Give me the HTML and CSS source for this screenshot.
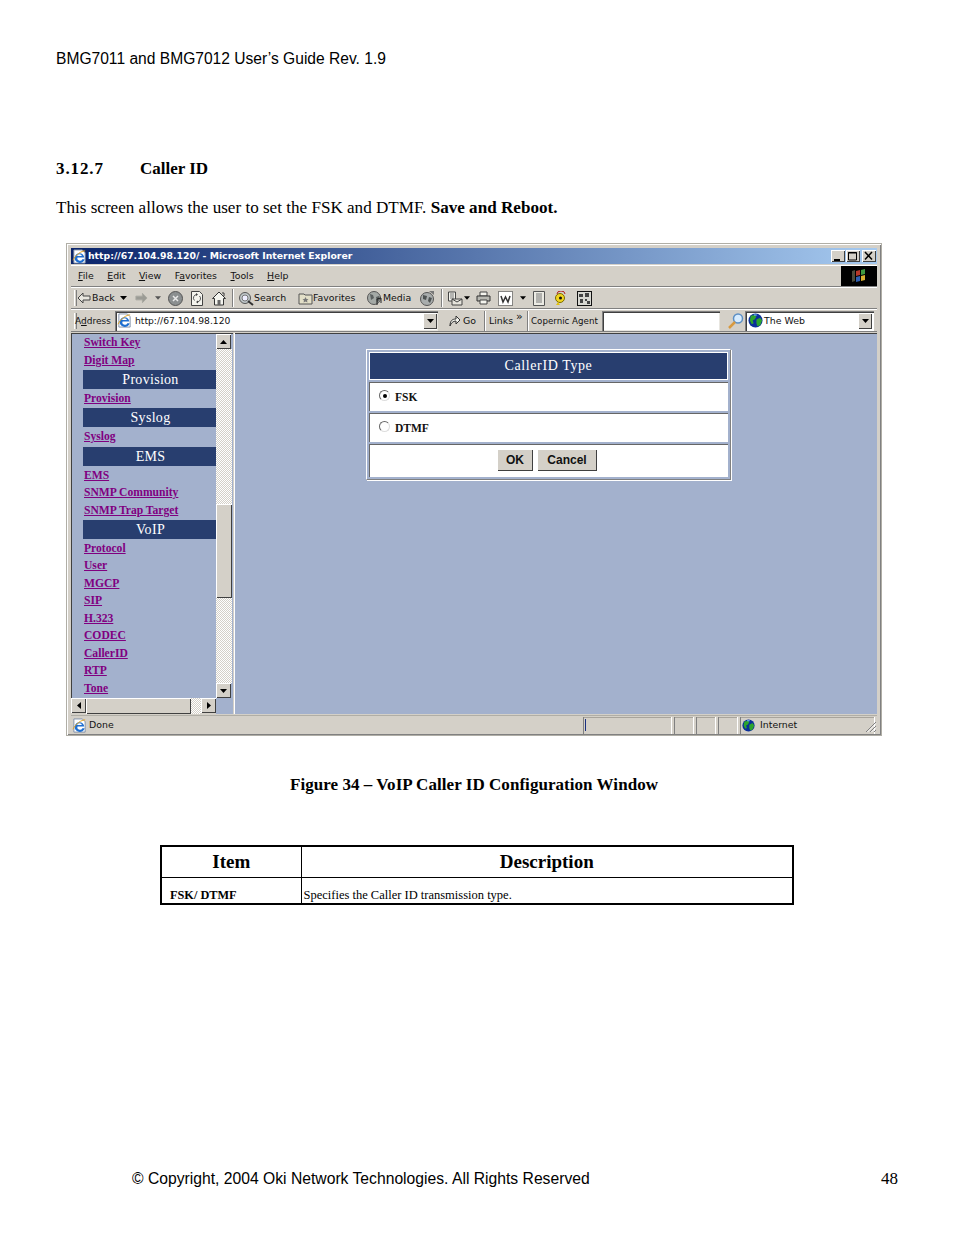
FILE: index.html
```html
<!DOCTYPE html>
<html lang="en">
<head>
<meta charset="utf-8">
<title>BMG7011 and BMG7012 User's Guide</title>
<link rel="stylesheet" href="styles.css">
</head>
<body>
<svg class="defs" width="0" height="0" aria-hidden="true">
  <defs>
    <symbol id="ie" viewBox="0 0 16 16">
      <path d="M2 1h9l3 3v11H2z" fill="#fff" stroke="#7f8fa8"/>
      <path d="M3 9a5 4.600 0 0 1 10 0H6a2.500 2.300 0 0 0 5 2h2.500a5 4.500 0 0 1-10.500-2z" fill="#1f6fd0" fill-rule="evenodd"/>
      <path d="M5.500 7.500a2.500 2 0 0 1 5 0z" fill="#fff"/>
      <path d="M1 12C4 6 10 2 14 2" fill="none" stroke="#e3a21a"/>
    </symbol>
    <symbol id="globe" viewBox="0 0 16 16">
      <circle cx="8" cy="8" r="7.500" fill="#0b2f9a"/>
      <path d="M3 3l4-1 2 2-2 3-2 1 1 3-2 1-2-4zM9 7l4-2 2 3-2 5-3 1-1-3z" fill="#2da52d"/>
      <path d="M6 1.500l3 0 1 1-3 .5z" fill="#7fd0ff"/>
    </symbol>
    <symbol id="drop" viewBox="0 0 7 4"><path d="M0 0h7L3.500 4z" fill="#000"/></symbol>
    <symbol id="dropg" viewBox="0 0 7 4"><path d="M0 0h7L3.500 4z" fill="#555"/></symbol>
  </defs>
</svg>

<main class="page">
  <p class="running">BMG7011 and BMG7012 User’s Guide Rev. 1.9</p>
  <h2 class="section"><span class="section-no">3.12.7</span><span>Caller ID</span></h2>
  <p class="intro">This screen allows the user to set the FSK and DTMF. <b>Save and Reboot.</b></p>

  <div class="win">
    <div class="title">
      <svg class="title-ico" width="15" height="15"><use href="#ie"/></svg>
      <span class="title-text">http://67.104.98.120/ - Microsoft Internet Explorer</span>
      <span class="ctl">
        <span class="cbtn"><svg width="13" height="12" viewBox="0 0 13 12"><path d="M3 9h6v2H3z" fill="#000"/></svg></span>
        <span class="cbtn"><svg width="13" height="12" viewBox="0 0 13 12"><path d="M2.500 2.500h8v7.500h-8zM2 3h9" fill="none" stroke="#000"/></svg></span>
        <span class="cbtn last"><svg width="13" height="12" viewBox="0 0 13 12"><path d="M3 2l7 7.500M10 2L3 9.500" fill="none" stroke="#000" stroke-width="1.500"/></svg></span>
      </span>
    </div>

    <div class="menubar">
      <span class="menu"><u>F</u>ile</span>
      <span class="menu"><u>E</u>dit</span>
      <span class="menu"><u>V</u>iew</span>
      <span class="menu">F<u>a</u>vorites</span>
      <span class="menu"><u>T</u>ools</span>
      <span class="menu"><u>H</u>elp</span>
      <span class="brand">
        <svg width="18" height="17" viewBox="0 0 18 17">
          <path d="M2 3l3-1v11l-3 1z" fill="#4a4a3a"/>
          <path d="M6 3l4-1v5l-4 1z" fill="#b5382a"/><path d="M11 2l4-1v5l-4 1z" fill="#3f9a3f"/>
          <path d="M6 9l4-1v5l-4 1z" fill="#2f5fb0"/><path d="M11 8l4-1v5l-4 1z" fill="#d8b030"/>
        </svg>
      </span>
    </div>

    <div class="toolbar">
      <span class="grip"></span>
      <svg width="14" height="12" viewBox="0 0 14 12"><path d="M6 1L1 6l5 5V8h7V4H6z" fill="#e8e6df" stroke="#444"/></svg>
      <span class="tb-label back">Back</span>
      <svg class="m7" width="7" height="4"><use href="#drop"/></svg>
      <svg class="m8" width="13" height="12" viewBox="0 0 14 12"><path d="M8 1l5 5-5 5V8H1V4h7z" fill="#9b9b95" stroke="#a8a8a0"/></svg>
      <svg class="m7" width="6" height="4"><use href="#dropg"/></svg>
      <svg class="m7" width="15" height="15" viewBox="0 0 15 15"><circle cx="7.500" cy="7.500" r="7" fill="#8b8f90" stroke="#555"/><path d="M5 5l5 5M10 5l-5 5" stroke="#e8e8e8" stroke-width="1.500"/></svg>
      <svg class="m7" width="14" height="15" viewBox="0 0 14 15"><path d="M1.500 .5h8l3 3v11h-11z" fill="#f4f4ee" stroke="#444"/><path d="M7 3.500a3.500 3.500 0 0 0-2.500 6M7 11a3.500 3.500 0 0 0 2.500-6" fill="none" stroke="#555"/><path d="M6 2v3l2-1.500zM8 9.500v3L6 11z" fill="#444"/></svg>
      <svg class="m8" width="14" height="15" viewBox="0 0 14 15"><path d="M7 1L.5 7.500h2v6.500h9V7.500h2zM10 2h2v3" fill="#f4f4ee" stroke="#333"/><path d="M5.500 9h3v5h-3z" fill="#666"/></svg>
      <span class="sep m6"></span>
      <svg class="m4" width="16" height="15" viewBox="0 0 16 15"><circle cx="7" cy="7" r="5.500" fill="#bfc7c9" stroke="#555"/><circle cx="7" cy="7" r="3" fill="#eef" stroke="#777"/><path d="M10 10l5 4" stroke="#333" stroke-width="2"/></svg>
      <span class="tb-label search">Search</span>
      <svg class="m11" width="15" height="14" viewBox="0 0 15 14"><path d="M1 3h5l1 1h7v9H1z" fill="#e3dfc8" stroke="#555"/><path d="M7.500 6l1 2 2 .2-1.500 1.300.5 2-2-1-2 1 .5-2L4.500 8.200l2-.2z" fill="#777"/></svg>
      <span class="tb-label fav">Favorites</span>
      <svg class="m10" width="16" height="15" viewBox="0 0 16 15"><circle cx="7" cy="7" r="6.500" fill="#a4a9a6" stroke="#555"/><path d="M3 3l3 1 1 3-3 2zM9 6l3-1 1 3-3 4z" fill="#5b6060"/><path d="M10 14V8l4-1v5" fill="none" stroke="#222"/></svg>
      <span class="tb-label media">Media</span>
      <svg class="m9" width="16" height="15" viewBox="0 0 16 15"><circle cx="8" cy="8" r="6.500" fill="#a9adad" stroke="#555"/><path d="M4 4l4 1-1 4-3-1zM10 6l3 1-2 5-2-2z" fill="#4e5353"/><path d="M10 0h5v4z" fill="#777"/></svg>
      <span class="sep m6"></span>
      <svg class="m4" width="17" height="15" viewBox="0 0 17 15"><path d="M1.500 1h7v9h-7z" fill="#f4f4ee" stroke="#444"/><path d="M3 3h4M3 5h4M3 7h4" stroke="#777"/><path d="M5 8h10v6H5z" fill="#e6e4dc" stroke="#444"/><path d="M5 8l5 3 5-3" fill="none" stroke="#444"/></svg>
      <svg class="m0" width="6" height="4"><use href="#drop"/></svg>
      <svg class="m6" width="15" height="14" viewBox="0 0 15 14"><path d="M4 1h7v4H4z" fill="#f4f4ee" stroke="#444"/><path d="M1 5h13v5H1z" fill="#b8b8b2" stroke="#333"/><path d="M4 9h7v4H4z" fill="#f4f4ee" stroke="#444"/></svg>
      <svg class="m7" width="15" height="15" viewBox="0 0 15 15"><rect x=".5" y=".5" width="14" height="14" fill="#fff" stroke="#222" stroke-dasharray="1 1"/><path d="M3 5l2 6 2.500-5L10 11l2-6" fill="none" stroke="#333" stroke-width="1.500"/></svg>
      <svg class="m7" width="6" height="4"><use href="#drop"/></svg>
      <svg class="m6" width="14" height="15" viewBox="0 0 14 15"><path d="M1.500 .5h11v14h-11z" fill="#ecebe4" stroke="#555"/><path d="M4 3h6M4 5h6M4 7h6M4 9h6M4 11h6" stroke="#777"/></svg>
      <svg class="m8" width="13" height="15" viewBox="0 0 13 15"><path d="M3 3a4 3 0 0 1 8 0" fill="none" stroke="#b02020"/><circle cx="6" cy="7" r="4.500" fill="#f2d520" stroke="#7a6a00"/><circle cx="6.500" cy="7" r="1.500" fill="#111"/><path d="M4 11l-2 3h4z" fill="#e0c010"/></svg>
      <svg class="m10" width="15" height="15" viewBox="0 0 15 15"><rect x=".5" y=".5" width="14" height="14" fill="#d8d8d2" stroke="#111"/><path d="M2 3h4v3H2zM8 2h4v4H8zM3 8h3v4H3zM8 8h2v2H8zM10 10h3v3h-3z" fill="#444"/></svg>
    </div>

    <div class="addrbar">
      <span class="grip"></span>
      <span class="lbl addr-lbl">A<u>d</u>dress</span>
      <span class="field addr">
        <svg width="15" height="15"><use href="#ie"/></svg>
        <span class="addr-text">http://67.104.98.120</span>
        <span class="combo-btn"><svg width="7" height="4"><use href="#drop"/></svg></span>
      </span>
      <svg class="go-ico" width="12" height="13" viewBox="0 0 12 13"><path d="M1 12c0-5 2-7 6-7V2l4 4-4 4V7C4 7 2 9 1 12z" fill="#f4f4ee" stroke="#333"/></svg>
      <span class="lbl go">Go</span>
      <span class="vr vr-links"></span>
      <span class="lbl links">Links</span>
      <span class="lbl chev">»</span>
      <span class="vr vr-cop"></span>
      <span class="lbl cop">Copernic Agent</span>
      <span class="field cop-field"></span>
      <svg class="mag" width="17" height="16" viewBox="0 0 17 16"><circle cx="11" cy="5.500" r="4.500" fill="#d7ecff" stroke="#5c8fc4" stroke-width="1.500"/><path d="M8 9l-6 6" stroke="#d89a40" stroke-width="2.500"/></svg>
      <span class="web">
        <svg width="15" height="15"><use href="#globe"/></svg>
        <span class="web-text">The Web</span>
        <span class="combo-btn"><svg width="7" height="4"><use href="#drop"/></svg></span>
      </span>
    </div>

    <div class="frames">
      <div class="left">
        <div class="left-main">
          <nav class="nav">
            <a class="link" href="#">Switch Key</a>
            <a class="link" href="#">Digit Map</a>
            <div class="bar">Provision</div>
            <a class="link" href="#">Provision</a>
            <div class="bar">Syslog</div>
            <a class="link" href="#">Syslog</a>
            <div class="bar">EMS</div>
            <a class="link" href="#">EMS</a>
            <a class="link" href="#">SNMP Community</a>
            <a class="link" href="#">SNMP Trap Target</a>
            <div class="bar">VoIP</div>
            <a class="link" href="#">Protocol</a>
            <a class="link" href="#">User</a>
            <a class="link" href="#">MGCP</a>
            <a class="link" href="#">SIP</a>
            <a class="link" href="#">H.323</a>
            <a class="link" href="#">CODEC</a>
            <a class="link" href="#">CallerID</a>
            <a class="link" href="#">RTP</a>
            <a class="link" href="#">Tone</a>
          </nav>
          <div class="vscroll">
            <span class="sbtn"><svg width="7" height="4" viewBox="0 0 7 4"><path d="M0 4h7L3.500 0z" fill="#000"/></svg></span>
            <span class="track t1"></span>
            <span class="thumb-v"></span>
            <span class="track t2"></span>
            <span class="sbtn"><svg width="7" height="4"><use href="#drop"/></svg></span>
          </div>
        </div>
        <div class="hscroll">
          <span class="sbtn"><svg width="4" height="7" viewBox="0 0 4 7"><path d="M4 0v7L0 3.500z" fill="#000"/></svg></span>
          <span class="thumb-h"></span>
          <span class="track t3"></span>
          <span class="sbtn"><svg width="4" height="7" viewBox="0 0 4 7"><path d="M0 0v7l4-3.500z" fill="#000"/></svg></span>
        </div>
      </div>
      <div class="divider"></div>
      <div class="right">
        <form class="panel">
          <div class="panel-head">CallerID Type</div>
          <label class="panel-row row-a"><span class="radio on"></span>FSK</label>
          <label class="panel-row row-b"><span class="radio"></span>DTMF</label>
          <div class="panel-row row-c">
            <span class="btn">OK</span>
            <span class="btn">Cancel</span>
          </div>
        </form>
      </div>
    </div>

    <div class="status">
      <span class="st-main">
        <svg width="15" height="15"><use href="#ie"/></svg>
        <span class="st-done">Done</span>
      </span>
      <span class="st-cell st-prog"><span class="caret"></span></span>
      <span class="st-cell st-s1"></span>
      <span class="st-cell st-s2"></span>
      <span class="st-cell st-s2"></span>
      <span class="st-cell st-zone">
        <svg width="13" height="13"><use href="#globe"/></svg>
        <span class="st-inet">Internet</span>
      </span>
      <svg class="resize" width="12" height="12" viewBox="0 0 12 12"><path d="M11 1L1 11M11 5l-6 6M11 9l-2 2" stroke="#808080"/><path d="M11 2.500L2.500 11M11 6.500L6.500 11" stroke="#fff"/></svg>
    </div>
  </div>

  <p class="caption">Figure 34 – VoIP Caller ID Configuration Window</p>

  <table class="spec">
    <thead>
      <tr><th class="col-item">Item</th><th>Description</th></tr>
    </thead>
    <tbody>
      <tr><td class="cell-item">FSK/ DTMF</td><td class="cell-desc">Specifies the Caller ID transmission type.</td></tr>
    </tbody>
  </table>

  <footer class="foot">
    <span>© Copyright, 2004 Oki Network Technologies. All Rights Reserved</span>
    <span class="pageno">48</span>
  </footer>
</main>
</body>
</html>
```
FILE: styles.css
```css
* { box-sizing: border-box; }
html, body { margin: 0; background: #fff; }
.defs { position: absolute; }
.page { width: 954px; height: 1235px; padding: 50px 0 0 56px; overflow: hidden; color: #000; font-family: "Liberation Serif", serif; }
.running { margin: 0; font: 15.6px/18px "Liberation Sans", sans-serif; }
.section { margin: 92px 0 0; display: flex; font: bold 17px/18px "Liberation Serif", serif; }
.section-no { width: 84px; letter-spacing: .9px; }
.intro { margin: 21px 0 0; font: 17.1px/18px "Liberation Serif", serif; }
.intro b { font-weight: bold; }

/* browser window */
.win { margin: 26px 0 0 10px; width: 816px; height: 493px; background: #d4d0c8; border: 1px solid #b0aea6; padding: 4px 4px 2px; box-shadow: inset 1px 1px 0 #fff, inset -1px -1px 0 #808080; font: 10px/12px "DejaVu Sans", sans-serif; color: #111; display: flex; flex-direction: column; }
.title { height: 16px; flex: none; display: flex; align-items: center; padding-left: 1px; background: linear-gradient(90deg, #0a246a, #a6caf0); }
.title-ico { flex: none; }
.title-text { color: #fff; font-weight: bold; font-size: 9.3px; margin-left: 1px; white-space: nowrap; }
.ctl { margin-left: auto; display: flex; gap: 1px; padding-right: 1px; }
.cbtn { width: 14px; height: 12px; background: #d4d0c8; box-shadow: inset 1px 1px 0 #fff, inset -1px -1px 0 #404040; display: block; }
.cbtn svg { display: block; }
.cbtn.last { margin-left: 1px; }

.menubar { height: 22px; flex: none; display: flex; align-items: center; border-top: 1px solid #fff; border-bottom: 1px solid #808080; margin-top: 1px; padding-left: 7px; }
.menu { margin-right: 13.5px; font-size: 9.4px; }
.brand { margin-left: auto; width: 36px; height: 20px; background: #000; display: flex; align-items: center; justify-content: center; }

.toolbar { height: 22px; flex: none; display: flex; align-items: center; border-top: 1px solid #fff; border-bottom: 1px solid #808080; }
.grip { width: 3px; height: 16px; margin-left: 3px; border-left: 1px solid #fff; border-right: 1px solid #808080; flex: none; }
.toolbar svg { flex: none; }
.tb-label { font-size: 9.4px; white-space: nowrap; }
.back { width: 22px; padding-left: 1px; }
.search { width: 33px; }
.fav { width: 44px; }
.media { width: 27px; }
.sep { width: 2px; height: 18px; border-left: 1px solid #808080; border-right: 1px solid #fff; flex: none; }
.m0 { margin-left: 0; } .m4 { margin-left: 4px; } .m6 { margin-left: 6px; } .m7 { margin-left: 7px; } .m8 { margin-left: 8px; } .m9 { margin-left: 9px; } .m10 { margin-left: 10px; } .m11 { margin-left: 11px; }

.addrbar { height: 23px; flex: none; display: flex; align-items: center; border-top: 1px solid #fff; border-bottom: 1px solid #808080; }
.addrbar > svg { flex: none; }
.lbl { font-size: 9.4px; white-space: nowrap; }
.addr-lbl { width: 40px; margin-left: -2px; font-size: 9px; }
.field { height: 20px; background: #fff; box-shadow: inset 1px 1px 0 #808080, inset 2px 2px 0 #404040, inset -1px -1px 0 #e8e6e0; flex: none; }
.addr { width: 323px; display: flex; align-items: center; padding: 0 1px 0 2px; }
.addr svg { flex: none; }
.addr-text { font-size: 9.2px; margin-left: 3px; }
.combo-btn { margin-left: auto; width: 14px; height: 16px; background: #d4d0c8; box-shadow: inset 1px 1px 0 #fff, inset -1px -1px 0 #404040; display: flex; align-items: center; justify-content: center; flex: none; }
.go-ico { margin-left: 11px; }
.go { margin-left: 2px; width: 21px; }
.vr { width: 2px; height: 20px; border-left: 1px solid #808080; border-right: 1px solid #fff; flex: none; }
.links { margin-left: 3px; width: 27px; }
.chev { width: 11px; font-size: 11px; line-height: 9px; align-self: flex-start; margin-top: 2px; }
.cop { margin-left: 2px; width: 71px; font-size: 8.7px; }
.cop-field { width: 118px; }
.mag { margin-left: 7px; }
.web { margin-left: 1px; width: 129px; height: 20px; background: #fff; box-shadow: inset 1px 1px 0 #808080, inset 2px 2px 0 #404040; display: flex; align-items: center; padding: 0 2px 0 3px; flex: none; }
.web svg { flex: none; }
.web-text { margin-left: 1px; font-size: 9.4px; }

/* frames */
.frames { height: 381px; flex: none; margin-top: 1px; display: flex; background: #a3b1cd; box-shadow: inset 1px 1px 0 #404040; }
.left { width: 162px; flex: none; display: flex; flex-direction: column; }
.left-main { height: 365px; display: flex; flex: none; }
.nav { width: 145px; flex: none; padding: 1.25px 0 0 12px; display: flex; flex-direction: column; }
.link { height: 17.5px; padding-left: 1px; color: #800080; font: bold 11.6px/17.5px "Liberation Serif", serif; text-decoration: underline; white-space: nowrap; align-self: flex-start; }
.bar { height: 19px; margin: .75px 0 1px; padding-left: 2px; flex: none; background: #283e6f; color: #fff; text-align: center; font: 14px/19px "Liberation Serif", serif; letter-spacing: .3px; }
.vscroll { width: 16px; flex: none; padding-top: 1px; display: flex; flex-direction: column; }
.sbtn { width: 15px; height: 15px; flex: none; background: #d4d0c8; box-shadow: inset 1px 1px 0 #fff, inset -1px -1px 0 #404040; display: flex; align-items: center; justify-content: center; }
.track { display: block; background: repeating-conic-gradient(#fff 0 25%, #d4d0c8 0 50%) 0 0 / 2px 2px; }
.t1 { height: 155px; }
.t2 { height: 85px; }
.thumb-v { height: 94px; flex: none; background: #d4d0c8; box-shadow: inset 1px 1px 0 #fff, inset -1px -1px 0 #404040; }
.hscroll { height: 16px; width: 145px; display: flex; background: #d4d0c8; flex: none; }
.thumb-h { width: 105px; background: #d4d0c8; box-shadow: inset 1px 1px 0 #fff, inset -1px -1px 0 #404040; }
.t3 { width: 10px; flex: none; }
.divider { width: 2px; flex: none; background: #d4d0c8; border-right: 1px solid #fff; }
.right { flex: 1; padding: 16px 0 0 131px; }

.panel { width: 365px; height: 131px; padding: 2px; display: flex; flex-direction: column; gap: 2px; background: #a3b1cd; border: 1px solid; border-color: #fff #808080 #808080 #fff; box-shadow: 1px 1px 0 #fff; }
.panel-head { height: 28px; flex: none; background: #283e6f; border: 1px solid #fff; color: #fff; text-align: center; font: 14px/26px "Liberation Serif", serif; letter-spacing: .6px; }
.panel-row { background: #fff; flex: none; border-top: 1px solid #666; border-left: 1px solid #666; display: flex; align-items: center; font: bold 11.5px/14px "Liberation Serif", serif; padding-left: 9px; }
.row-a { height: 29px; }
.row-b { height: 29px; }
.row-c { height: 33px; justify-content: center; gap: 4px; padding: 0 4px 2px 0; }
.radio { width: 11px; height: 11px; border-radius: 50%; border: 1px solid #666; border-right-color: #ddd; border-bottom-color: #ddd; background: #fff; margin: -3px 5px 0 0; flex: none; display: flex; align-items: center; justify-content: center; }
.radio.on::after { content: ""; width: 4px; height: 4px; border-radius: 50%; background: #000; }
.btn { height: 22px; background: #d4d0c8; box-shadow: inset 1px 1px 0 #fff, inset -1px -1px 0 #404040; font: bold 12px/22px "Liberation Sans", sans-serif; color: #111; text-align: center; }
.btn:first-child { width: 36px; }
.btn:last-child { width: 60px; }

.status { height: 19px; flex: none; display: flex; align-items: center; margin-top: 1px; position: relative; border-top: 1px solid #b0aea6; }
.st-main { width: 510px; display: flex; align-items: center; padding-left: 1px; flex: none; }
.st-main svg { flex: none; }
.st-done { margin-left: 2px; font-size: 9.4px; }
.st-cell { height: 17px; margin-left: 2px; flex: none; box-shadow: inset 1px 0 0 #808080, inset -1px 0 0 #fff, inset 0 1px 0 #a8a49c; display: flex; align-items: center; }
.st-prog { width: 89px; padding-left: 2px; }
.caret { width: 1px; height: 12px; background: #1a2f80; }
.st-s1 { width: 20px; }
.st-s2 { width: 20px; }
.st-zone { width: 135px; padding-left: 2px; }
.st-zone svg { flex: none; }
.st-inet { margin-left: 5px; font-size: 9.4px; }
.resize { position: absolute; right: 0; bottom: 1px; }

.caption { margin: 40px 0 0; width: 836px; text-align: center; font: bold 17px/18px "Liberation Serif", serif; letter-spacing: .05px; }

.spec { margin: 51px 0 0 104px; width: 634px; height: 60px; border-collapse: collapse; border: 2px solid #000; table-layout: fixed; }
.spec th { height: 31px; padding: 0; border-bottom: 1px solid #000; border-left: 1px solid #000; font: bold 19px/22px "Liberation Serif", serif; }
.spec .col-item { width: 140px; border-left: 0; }
.spec td { padding: 0; vertical-align: bottom; border-left: 1px solid #000; }
.spec .cell-item { font: bold 12.3px/16px "Liberation Serif", serif; padding-left: 8px; border-left: 0; }
.spec .cell-desc { font: 12.5px/16px "Liberation Serif", serif; padding-left: 2px; }

.foot { margin: 265px 0 0 76px; width: 766px; display: flex; justify-content: space-between; font: 15.69px/18px "Liberation Sans", sans-serif; }
.pageno { font: 17px/18px "Liberation Serif", serif; }
```
